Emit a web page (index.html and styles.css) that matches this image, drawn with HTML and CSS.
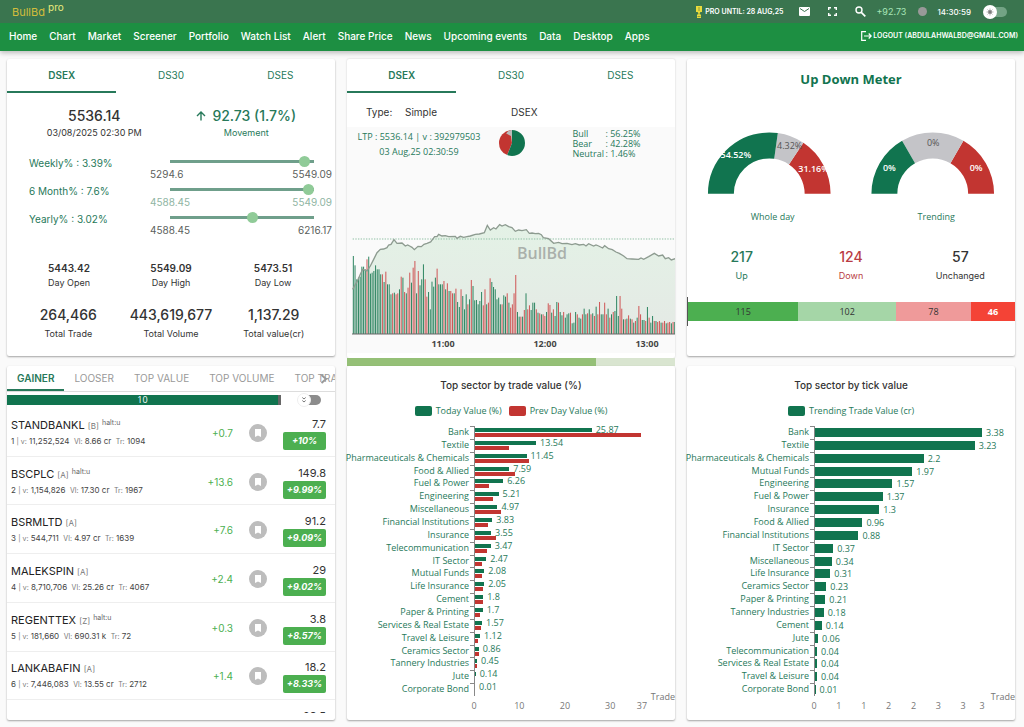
FILE: index.html
```html
<!DOCTYPE html>
<html lang="en">
<head>
<meta charset="utf-8">
<meta name="viewport" content="width=device-width, initial-scale=1">
<title>BullBd pro</title>
<link rel="stylesheet" href="styles.css">
</head>
<body>
<header class="site-header">
  <div class="topbar">
    <a class="brand" href="#">BullBd <sup class="brand-pro">pro</sup></a>
    <div class="tools">
      <span class="pro-until"><svg class="trophy" viewBox="0 0 8 12" aria-hidden="true"><path fill="#e9dc3c" d="M1 0h6v6H5.500L4.700 7V8.500H6V12H2V8.500h1.300V7L2.500 6H1z"/><path stroke="#8f9a3c" d="M4 1v4M2.500 10.500h3" fill="none"/></svg>PRO UNTIL: 28 AUG,25</span>
      <button class="icon-btn" aria-label="Messages"><svg width="11" height="9" viewBox="0 0 11 9"><rect width="11" height="9" rx="1" fill="#fff"/><path d="M1 1.500 5.500 4.500 10 1.500" stroke="#3a754f" fill="none"/></svg></button>
      <button class="icon-btn" aria-label="Full screen"><svg width="9" height="9" viewBox="0 0 9 9"><path d="M.7 3V.7H3M6 .7h2.300V3M8.300 6v2.300H6M3 8.300H.7V6" stroke="#fff" stroke-width="1.400" fill="none"/></svg></button>
      <button class="icon-btn" aria-label="Search"><svg width="11" height="11" viewBox="0 0 11 11"><circle cx="4" cy="4" r="3" stroke="#fff" stroke-width="1.400" fill="none"/><path d="m6.300 6.300 4 4" stroke="#fff" stroke-width="1.700"/></svg></button>
      <span class="change">+92.73</span>
      <span class="status-dot"></span>
      <time class="clock">14:30:59</time>
      <label class="switch switch-theme"><input type="checkbox" aria-label="Dark theme"><svg viewBox="0 0 14 14" aria-hidden="true"><circle cx="7" cy="7" r="7" fill="#fff"/><circle cx="7" cy="7" r="1.700" fill="#555"/><path d="M7 3.500v7M3.500 7h7M4.500 4.500l5 5M9.500 4.500l-5 5" stroke="#888" stroke-width=".6"/></svg></label>
    </div>
  </div>
  <nav class="navbar">
    <a href="#">Home</a><a href="#">Chart</a><a href="#">Market</a><a href="#">Screener</a><a href="#">Portfolio</a><a href="#">Watch List</a><a href="#">Alert</a><a href="#">Share Price</a><a href="#">News</a><a href="#">Upcoming events</a><a href="#">Data</a><a href="#">Desktop</a><a href="#">Apps</a>
    <a class="logout" href="#"><svg width="11" height="10" viewBox="0 0 11 10" aria-hidden="true"><path d="M5 .7H.7v8.600H5M3 5h7M7.700 2.500 10.200 5 7.700 7.500" stroke="#fff" stroke-width="1.200" fill="none"/></svg>LOGOUT (ABDULAHWALBD@GMAIL.COM)</a>
  </nav>
</header>

<main class="board">
  <div class="column">
    <section class="card card-top">
      <div class="tabs"><button class="tab active">DSEX</button><button class="tab">DS30</button><button class="tab">DSES</button></div>
      <div class="headline">
        <div><strong class="big">5536.14</strong><span class="note">03/08/2025 02:30 PM</span></div>
        <div class="up"><strong class="big"><svg width="10" height="10" viewBox="0 0 10 10" aria-hidden="true"><path d="M5 9.500V1M1 5l4-4 4 4" stroke="#27795a" stroke-width="1.400" fill="none"/></svg> 92.73 (1.7%)</strong><span class="note">Movement</span></div>
      </div>
      <div class="ranges">
        <div class="range-row"><label for="weekly">Weekly% : 3.39%</label><div><input id="weekly" type="range" value="97"><p class="limits"><span>5294.6</span><span>5549.09</span></p></div></div>
        <div class="range-row pale"><label for="six">6 Month% : 7.6%</label><div><input id="six" type="range" value="100"><p class="limits"><span>4588.45</span><span>5549.09</span></p></div></div>
        <div class="range-row"><label for="yearly">Yearly% : 3.02%</label><div><input id="yearly" type="range" value="58"><p class="limits"><span>4588.45</span><span>6216.17</span></p></div></div>
      </div>
      <div class="stats stats-day">
        <div><strong>5443.42</strong><span class="note">Day Open</span></div>
        <div><strong>5549.09</strong><span class="note">Day High</span></div>
        <div><strong>5473.51</strong><span class="note">Day Low</span></div>
      </div>
      <div class="stats">
        <div><strong class="big">264,466</strong><span class="note">Total Trade</span></div>
        <div><strong class="big">443,619,677</strong><span class="note">Total Volume</span></div>
        <div><strong class="big">1,137.29</strong><span class="note">Total value(cr)</span></div>
      </div>
    </section>

    <section class="card card-bottom">
      <div class="movers-tabs">
        <button class="active">GAINER</button><button>LOOSER</button><button>TOP VALUE</button><button>TOP VOLUME</button><button>TOP TRADE</button>
        <svg class="scroll-next" viewBox="0 0 8 10" aria-hidden="true"><path d="m1.500 1 4.500 4-4.500 4" stroke="#999" stroke-width="2" fill="none"/></svg>
      </div>
      <div class="refresh">
        <div class="refresh-bar">10</div>
        <label class="switch switch-list"><input type="checkbox" aria-label="Compact list"><svg viewBox="0 0 14 14" aria-hidden="true"><circle cx="7" cy="7" r="6.500" fill="#fff" stroke="#eee"/><path d="m5.300 4.500 1.700 1.500 1.700-1.500M5.300 7.500 7 9l1.700-1.500" stroke="#777" fill="none"/></svg></label>
      </div>
      <div class="mover-window"><ul class="movers" id="movers"></ul></div>
    </section>
  </div>

  <div class="column column-index">
    <section class="card card-top">
      <div class="tabs"><button class="tab active">DSEX</button><button class="tab">DS30</button><button class="tab">DSES</button></div>
      <div class="type-row"><label for="type">Type:</label><select id="type"><option>Simple</option></select><span>DSEX</span></div>
      <div class="index-chart">
        <div class="legend-row">
          <p>LTP : 5536.14 | v : 392979503<br>03 Aug,25 02:30:59</p>
          <svg width="26" height="26" viewBox="0 0 26 26" aria-hidden="true">
            <g transform="rotate(-90 13 13)" fill="none" stroke-width="13"><circle cx="13" cy="13" r="6.500" stroke="#c23531" pathLength="100" stroke-dasharray="42.300 57.700" stroke-dashoffset="-56.200"/><circle cx="13" cy="13" r="6.500" stroke="#bbb" pathLength="100" stroke-dasharray="1.500 98.500" stroke-dashoffset="-98.500"/><circle cx="13" cy="13" r="6.500" stroke="#11744f" pathLength="100" stroke-dasharray="56.200 43.800"/></g>
          </svg>
          <dl><dt>Bull</dt><dd>: 56.25%</dd><dt>Bear</dt><dd>: 42.28%</dd><dt>Neutral</dt><dd>: 1.46%</dd></dl>
        </div>
        <svg class="area" viewBox="0 0 323 136" role="img" aria-label="Index through the day">
          <defs><linearGradient id="fade" x1="0" y1="0" x2="0" y2="1"><stop offset="0" stop-color="#dcefdf"/><stop offset="1" stop-color="#dde4de"/></linearGradient></defs>
          <g id="plot" transform="scale(.3333) translate(-30 -33)"></g>
          <text class="watermark" x="190" y="42">BullBd</text>
          <text class="time" x="91" y="130">11:00</text><text class="time" x="193" y="130">12:00</text><text class="time" x="295" y="130">13:00</text>
        </svg>
      </div>
    </section>
    <div class="progress"><div class="progress-fill"></div></div>
    <section class="card card-bottom sector">
      <h2>Top sector by trade value (%)</h2>
      <p class="legend"><i class="key"></i>Today Value (%)<i class="key prev"></i>Prev Day Value (%)</p>
      <div class="bars" id="trade"></div>
      <div class="axis-name">Trade</div>
      <svg class="axis" id="trade-axis" height="16"></svg>
    </section>
  </div>

  <div class="column">
    <section class="card card-top meter">
      <h2 class="meter-title">Up Down Meter</h2>
      <svg class="gauges" viewBox="0 0 329 100" role="img" aria-label="Market breadth">
        <g fill="none" stroke-width="26">
          <path d="M34 71a48.500 48.500 0 0 1 97 0" stroke="#c23531" pathLength="100" stroke-dasharray="31.200 100" stroke-dashoffset="-68.800"/>
          <path d="M34 71a48.500 48.500 0 0 1 97 0" stroke="#c4c4c8" pathLength="100" stroke-dasharray="14.300 100" stroke-dashoffset="-54.500"/>
          <path d="M34 71a48.500 48.500 0 0 1 97 0" stroke="#11744f" pathLength="100" stroke-dasharray="54.500 100"/>
          <path d="M198 71a48.500 48.500 0 0 1 97 0" stroke="#c23531" pathLength="100" stroke-dasharray="33.300 100" stroke-dashoffset="-66.700"/>
          <path d="M198 71a48.500 48.500 0 0 1 97 0" stroke="#c4c4c8" pathLength="100" stroke-dasharray="33.400 100" stroke-dashoffset="-33.300"/>
          <path d="M198 71a48.500 48.500 0 0 1 97 0" stroke="#11744f" pathLength="100" stroke-dasharray="33.300 100"/>
        </g>
        <g class="gauge-text"><text x="49" y="35">54.52%</text><text x="127" y="49">31.16%</text><text x="203" y="48">0%</text><text x="290" y="48">0%</text></g>
        <g class="gauge-text mid"><text x="103" y="26">4.32%</text><text x="247" y="23">0%</text></g>
        <g class="gauge-name"><text x="86" y="97">Whole day</text><text x="250" y="97">Trending</text></g>
      </svg>
      <div class="stats counts">
        <div class="up"><strong class="big">217</strong><span class="note">Up</span></div>
        <div class="down"><strong class="big">124</strong><span class="note">Down</span></div>
        <div><strong class="big">57</strong><span class="note">Unchanged</span></div>
      </div>
      <div class="split">
        <span class="s1">115</span><span class="s2">102</span><span class="s3">78</span><span class="s4">46</span>
      </div>
    </section>
    <section class="card card-bottom sector">
      <h2>Top sector by tick value</h2>
      <p class="legend"><i class="key"></i>Trending Trade Value (cr)</p>
      <div class="bars" id="tick"></div>
      <div class="axis-name">Trade</div>
      <svg class="axis" id="tick-axis" height="16"></svg>
    </section>
  </div>
</main>
<script src="app.js"></script>
</body>
</html>
```
FILE: styles.css
```css
* { box-sizing: border-box; }
body { margin: 0; background: #fafafa; color: #333; font: 10px/14px Inter, "Open Sans", sans-serif; }
p, h2, ul, dl, dd { margin: 0; padding: 0; }
button, input, select { font: inherit; color: inherit; margin: 0; padding: 0; border: 0; background: none; }
a { color: inherit; text-decoration: none; }
strong { font-weight: 600; }
svg { display: block; }

.site-header { color: #fff; box-shadow: 0 2px 5px rgba(0, 0, 0, .25); }
.topbar { display: flex; justify-content: space-between; align-items: center; height: 23px; padding: 0 17px 0 12px; background: #3a754f; }
.brand { color: #d3bd3c; font-size: 11px; }
.brand-pro { color: #e9ea7c; font-size: 10px; line-height: 0; }
.tools { display: flex; align-items: center; }
.pro-until { display: flex; align-items: center; gap: 2px; margin-right: 16px; font-size: 7px; font-weight: 600; }
.trophy { width: 8px; height: 12px; }
.icon-btn { margin-right: 18px; }
.icon-btn + .icon-btn + .icon-btn { margin-right: 10px; }
.change { margin-right: 12px; color: #a8e6b8; font-size: 9px; }
.status-dot { width: 9px; height: 9px; margin-right: 10px; border-radius: 50%; background: #999; }
.clock { margin-right: 12px; font-size: 8px; font-weight: 500; }
.navbar { display: flex; align-items: center; gap: 12px; height: 28px; padding: 0 6px 2px 9px; background: #1d8f42; font-size: 10px; font-weight: 500; white-space: nowrap; }
.logout { display: flex; align-items: center; gap: 1px; margin-left: auto; font-size: 7px; font-weight: 600; }

.switch { display: grid; align-items: center; width: 24px; }
.switch input, .switch svg { grid-area: 1 / 1; }
.switch input { appearance: none; justify-self: end; width: 18px; height: 10px; border-radius: 5px; background: #73a385; }
.switch svg { width: 14px; height: 14px; }
.switch-list input { background: #8c8c8c; }

.board { display: grid; grid-template-columns: repeat(3, minmax(0, 1fr)); gap: 12px; padding: 8px 9px 7px 7px; }
.column { display: flex; flex-direction: column; gap: 10px; }
.column-index { gap: 0; }
.card { background: #fff; border-radius: 2px; box-shadow: 0 1px 2px rgba(0, 0, 0, .35); }
.card-top { min-height: 297px; }
.card-bottom { min-height: 354px; }
.column-index .card-top { min-height: 299px; box-shadow: 0 0 2px rgba(0, 0, 0, .2); }

.tabs { display: grid; grid-template-columns: repeat(3, 1fr); }
.tab { height: 34px; color: #27795a; border-bottom: 2px solid transparent; }
.tab.active { border-color: #27795a; font-weight: 600; }
.big { display: flex; justify-content: center; align-items: center; gap: 6px; font-size: 14px; font-weight: 500; line-height: 20px; }
.note { display: block; font-size: 9px; line-height: 14px; }
.headline { display: grid; grid-template-columns: 175fr 130fr 24fr; padding-top: 13px; text-align: center; }
.up { color: #27795a; }
.down { color: #b93c44; }
.ranges { padding: 12px 3px 0 22px; }
.range-row { display: flex; justify-content: space-between; height: 28px; color: #5c5f5d; }
.range-row label { padding-top: 4px; color: #27795a; }
.range-row div { width: 182px; padding-top: 4px; }
.range-row input { display: block; appearance: none; width: 144px; height: 11px; margin-left: 20px; background: linear-gradient(#6f9f8b, #6f9f8b) center / 100% 3px no-repeat; }
.range-row input::-webkit-slider-thumb { appearance: none; width: 11px; height: 11px; border-radius: 50%; background: #90cb98; }
.limits { display: flex; justify-content: space-between; line-height: 14px; }
.pale .limits { color: #8fb5a3; }
.stats { display: grid; grid-template-columns: 124fr 80fr 124fr; text-align: center; }
.stats strong { line-height: 16px; }
.stats .big { margin-bottom: 2px; line-height: 20px; }
.stats-day { padding: 24px 0 15px; }

.movers-tabs { position: relative; display: flex; overflow: hidden; height: 26px; border-bottom: 1px solid #ddd; color: #999; white-space: nowrap; }
.movers-tabs button { flex: none; padding: 0 10px; border-bottom: 2px solid transparent; }
.movers-tabs .active { color: #27795a; border-color: #27795a; font-weight: 600; }
.scroll-next { position: absolute; right: 7px; top: 8px; width: 8px; height: 10px; }
.refresh { display: flex; align-items: center; justify-content: space-between; height: 16px; padding-right: 14px; }
.refresh-bar { width: 274px; height: 10px; background: #11744f; border-right: 3px solid #666; color: #fff; font: 9px/10px "Open Sans", sans-serif; text-align: center; }
.mover-window { height: 305px; overflow: hidden; }
.movers { display: grid; grid-auto-rows: 1fr; min-height: 341px; list-style: none; }
.movers li { display: grid; grid-template-columns: 1fr 44px 18px 43px; column-gap: 16px; align-items: center; padding: 2px 9px 0 4px; border-bottom: 1px solid #eee; }
.code { font-size: 11px; line-height: 16px; color: #222; }
.code small { color: #777; font-size: 8px; }
.code sup { color: #666; font-size: 7px; line-height: 0; vertical-align: 4px; }
.detail { font-size: 8px; color: #444; white-space: nowrap; }
.detail small { color: #777; font-size: 7px; }
.gain { color: #4caf50; text-align: right; }
.bookmark { display: grid; place-items: center; width: 18px; height: 18px; border-radius: 50%; background: #bdbdbd; }
.price { text-align: right; line-height: 16px; font-size: 11px; }
.pct { display: block; height: 18px; border-radius: 2px; background: #4caf50; color: #fff; font-size: 9px; font-style: italic; font-weight: 700; line-height: 18px; text-align: center; }

.type-row { display: grid; grid-template-columns: 39px 1fr 172px; align-items: center; height: 34px; padding: 4px 0 0 19px; }
.type-row select { appearance: none; justify-self: start; }
.type-row span { padding-left: 8px; }
.index-chart { padding-left: 5px; background: #fafafa; font-family: "Open Sans", sans-serif; }
.legend-row { display: grid; grid-template-columns: 134fr 52fr 137fr; justify-items: center; height: 90px; padding-top: 2px; color: #27795a; font-size: 9px; line-height: 15px; text-align: center; }
.legend-row p { white-space: nowrap; }
.legend-row svg { margin-top: 1px; }
.legend-row dl { display: grid; grid-template-columns: 33px auto; align-content: start; line-height: 10px; text-align: left; }
.area { width: 100%; height: auto; font-family: "Open Sans", sans-serif; }
.watermark { font-size: 16px; font-weight: 600; fill: #aab0ab; text-anchor: middle; }
.time { font-size: 9px; font-weight: 700; fill: #444; text-anchor: middle; }
.progress { height: 8px; background: #d9e5d0; }
.progress-fill { width: 76%; height: 8px; background: #95c077; }

.meter { text-align: center; }
.meter-title { padding-top: 11px; color: #11744f; font: 700 13px/18px "Open Sans", sans-serif; }
.gauges { width: 100%; height: auto; margin-top: 35px; font-family: "Open Sans", sans-serif; font-size: 9px; }
.gauge-text { fill: #fff; font-weight: 600; text-anchor: middle; }
.mid { fill: #555; font-weight: 400; }
.gauge-name { fill: #27795a; text-anchor: middle; }
.counts { grid-template-columns: repeat(3, 1fr); padding-top: 24px; }
.split { display: flex; margin-top: 14px; padding: 5px 0; border-left: 1px solid #555; font: 9px/19px "Open Sans", sans-serif; }
.split span { flex-basis: 0; }
.split .s1 { flex-grow: 115; background: #4caf50; }
.split .s2 { flex-grow: 102; background: #a5d6a7; }
.split .s3 { flex-grow: 78; background: #ef9a9a; }
.split .s4 { flex-grow: 46; background: #f44336; color: #fff; font-weight: 700; }

.sector { color: #27795a; font: 9px/12px "Open Sans", sans-serif; }
.sector h2 { padding-top: 10px; color: #333; font: 500 10px/18px Inter, sans-serif; text-align: center; }
.legend { display: flex; justify-content: center; align-items: center; gap: 4px; height: 32px; padding-top: 2px; }
.key { width: 17px; height: 10px; border-radius: 2px; background: #11744f; }
.prev { background: #c23531; }
.key.prev { margin-left: 3px; }
.bars { display: grid; grid-auto-rows: 1fr; height: 270px; }
.bar-row { display: grid; grid-template-columns: 127px 1fr; min-height: 0; }
.bar-name { display: flex; justify-content: flex-end; padding-right: 5px; background: linear-gradient(#888, #888) right top / 4px 1px no-repeat; line-height: 11px; white-space: nowrap; }
.bar-track { display: grid; align-content: start; gap: 1px; padding: 2px 33px 0 0; border-left: 1px solid #888; }
.bar-line { display: flex; align-items: center; gap: 4px; height: 4px; line-height: 4px; }
.tick .bar-line { height: 9px; line-height: 9px; }
.bar { flex: none; height: 100%; background: #11744f; }
.bar.prev { background: #c23531; }
.axis-name { height: 2px; line-height: 2px; color: #777; text-align: right; }
.axis { width: calc(100% - 160px); margin-left: 127px; overflow: visible; fill: #777; text-anchor: middle; }
```
FILE: app.js
```js
const movers = [
  ["STANDBANKL", "B", "halt:u", "11,252,524", "8.66 cr", "1094", "+0.7", "7.7", "+10%"],
  ["BSCPLC", "A", "halt:u", "1,154,826", "17.30 cr", "1967", "+13.6", "149.8", "+9.99%"],
  ["BSRMLTD", "A", "", "544,711", "4.97 cr", "1639", "+7.6", "91.2", "+9.09%"],
  ["MALEKSPIN", "A", "", "8,710,706", "25.26 cr", "4067", "+2.4", "29", "+9.02%"],
  ["REGENTTEX", "Z", "halt:u", "181,660", "690.31 k", "72", "+0.3", "3.8", "+8.57%"],
  ["LANKABAFIN", "A", "", "7,446,083", "13.55 cr", "2712", "+1.4", "18.2", "+8.33%"]
];
document.getElementById("movers").innerHTML = movers.map((m, i) => `
  <li><div><div class="code">${m[0]} <small>[${m[1]}]</small> <sup>${m[2]}</sup></div>
  <div class="detail">${i + 1} <small>| v:</small> ${m[3]} &nbsp;<small>Vl:</small> ${m[4]} &nbsp;<small>Tr:</small> ${m[5]}</div></div>
  <span class="gain">${m[6]}</span>
  <button class="bookmark" aria-label="Bookmark ${m[0]}"><svg width="6" height="8" viewBox="0 0 6 8"><path d="M0 0h6v8L3 6.500 0 8z" fill="#fff"/></svg></button>
  <div><div class="price">${m[7]}</div><span class="pct">${m[8]}</span></div></li>`).join("") +
  `<li><span></span><span></span><span></span><div><div class="price">28.5</div><span class="pct"></span></div></li>`;

const trade = [
  ["Bank", 25.87, 36.9], ["Textile", 13.54, 7.6], ["Pharmaceuticals & Chemicals", 11.45, 11.9],
  ["Food & Allied", 7.59, 8.9], ["Fuel & Power", 6.26, 3.1], ["Engineering", 5.21, 4],
  ["Miscellaneous", 4.97, 5.8], ["Financial Institutions", 3.83, 2.8], ["Insurance", 3.55, 4.7],
  ["Telecommunication", 3.47, 2.6], ["IT Sector", 2.47, 1.6], ["Mutual Funds", 2.08, 1.5],
  ["Life Insurance", 2.05, 1.8], ["Cement", 1.8, 1.7], ["Paper & Printing", 1.7, 1],
  ["Services & Real Estate", 1.57, 1.4], ["Travel & Leisure", 1.12, 0.7], ["Ceramics Sector", 0.86, 0.8],
  ["Tannery Industries", 0.45, 0.5], ["Jute", 0.14, 0], ["Corporate Bond", 0.01, 0]
];
const tick = [
  ["Bank", 3.38], ["Textile", 3.23], ["Pharmaceuticals & Chemicals", 2.2], ["Mutual Funds", 1.97],
  ["Engineering", 1.57], ["Fuel & Power", 1.37], ["Insurance", 1.3], ["Food & Allied", 0.96],
  ["Financial Institutions", 0.88], ["IT Sector", 0.37], ["Miscellaneous", 0.34], ["Life Insurance", 0.31],
  ["Ceramics Sector", 0.23], ["Paper & Printing", 0.21], ["Tannery Industries", 0.18], ["Cement", 0.14],
  ["Jute", 0.06], ["Telecommunication", 0.04], ["Services & Real Estate", 0.04], ["Travel & Leisure", 0.04],
  ["Corporate Bond", 0.01]
];
function drawBars(id, rows, max, ticks) {
  const width = v => (100 * v / max).toFixed(1) + "%";
  const box = document.getElementById(id);
  box.classList.add(id);
  box.innerHTML = rows.map(r => `<div class="bar-row"><span class="bar-name">${r[0].replace("&", "&amp;")}</span>
    <div class="bar-track"><div class="bar-line"><i class="bar" style="width:${width(r[1])}"></i><span>${r[1]}</span></div>
    ${r.length > 2 ? `<div class="bar-line"><i class="bar prev" style="width:${width(r[2])}"></i></div>` : ""}</div></div>`).join("");
  document.getElementById(id + "-axis").innerHTML = ticks.map(t => `<text x="${width(t[0])}" y="11">${t[1]}</text>`).join("");
}
drawBars("trade", trade, 37, [[0, 0], [10, 10], [20, 20], [30, 30], [37, 37]]);
drawBars("tick", tick, 3.38, [[0, 0], [0.5, 1], [1, 1], [1.5, 2], [2, 2], [2.5, 3], [3, 3], [3.38, 3]]);

const line = "32,250 40,235 45,228 55,205 62,190 75,195 85,180 95,160 105,140 115,130 125,129 135,125 140,117 147,115 156,101 165,112 180,111 190,120 197,117 203,120 210,124 217,131 228,121 238,122 246,115 255,112 266,108 278,92 285,92 290,85 300,90 310,89 320,92 340,91 345,97 355,91 365,94 375,92 385,90 400,85 412,84 427,80 436,58 445,72 455,65 462,69 473,56 480,60 490,56 500,62 510,65 520,76 530,72 540,74 553,71 562,82 570,81 580,83 590,82 598,86 604,95 620,98 635,112 650,109 660,113 675,112 690,116 700,113 712,117 725,115 732,120 740,113 755,120 762,117 770,120 782,126 788,119 800,128 811,131 822,138 832,142 845,150 855,158 870,159 890,160 897,156 905,160 920,152 937,142 950,150 962,147 970,158 980,155 988,162 1000,158";
const volume = "150g 178g 220g 215g 212g 182g 182g 190g 160r 152g 203g 200g 195g 178g 190g 190g 205g 205r 228g 197r 235g 235g 265g 262r 260g 265r 262r 250g 212r 215g 258r 262g 245r 200r 230g 185r 165r 262g 195r 238g 220g 175g 220r 272r 258g 310g 227g 242g 215g 188r 235g 235g 235g 225r 250g 232r 255g 255r 262r 262g 248r 288g 303g 250r 270g 310g 265g 295r 280g 222r 240g 283g 282g 295g 285g 258g 298r 250r 295g 290r 217r 228g 243g 250g 280g 275g 295g 295r 268g 272g 262r 290g 305r 295r 262r 207r 318g 332g 332r 332g 312r 262g 310r 298r 312g 290g 290g 310r 320g 322r 325g 325r 330r 318g 292r 297r 320g 310r 330g 288g 290r 318g 328g 318r 335g 325g 322g 320r 352g 350g 318g 325r 335g 338g 325r 308g 325g 322r 310g 325r 322g 330r 302g 325r 288r 325g 325g 290r 325r 308g 335r 325g 318r 315g 270g 330g 270r 308r 340g 340r 338g 328r 338g 340r 350g 345r 335g 300r 325r 342g 342g 345r 303g 335r 350g 330g 345r 345g 348r 345r 350g 350r 345r 352g 350r 348r 352g 348r 348g 345g".split(" ");
document.getElementById("plot").innerHTML =
  `<path d="M32,384 L${line} L1000,384z" fill="url(#fade)" fill-opacity=".75"/>` +
  `<path d="M32,99H1000" stroke="#8fc0a4" stroke-width="3" stroke-dasharray="4 4"/>` +
  volume.map((v, i) => `<path d="M${(34 + i * 5.13).toFixed(1)},384V${parseInt(v)}" stroke="${v.endsWith("g") ? "#2c8560" : "#cf5454"}" stroke-width="3"/>`).join("") +
  `<polyline points="${line}" fill="none" stroke="#8d9b90" stroke-width="4"/><path d="M30,384H1000" stroke="#666" stroke-width="3"/>`;
```
